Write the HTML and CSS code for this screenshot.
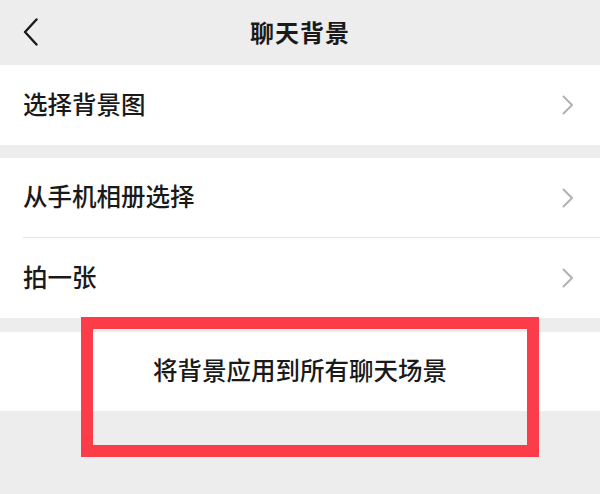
FILE: index.html
```html
<!DOCTYPE html>
<html lang="zh-CN">
<head>
<meta charset="utf-8">
<title>聊天背景</title>
<link rel="stylesheet" href="styles.css">
</head>
<body>
<div class="page">
  <header class="nav">
    <div class="nav-left">
      <svg class="back" width="16" height="28" viewBox="0 0 16 28"><path d="M13.5 1.5 L2 14 L13.5 26.5" fill="none" stroke="#1a1a1a" stroke-width="2.4" stroke-linecap="round" stroke-linejoin="round"/></svg>
    </div>
    <div class="nav-title">聊天背景</div>
    <div class="nav-right"></div>
  </header>

  <section class="group">
    <div class="row"><span class="label">选择背景图</span><svg class="arrow" width="12" height="20" viewBox="0 0 12 20"><path d="M1.5 1.5 L10 10 L1.5 18.5" fill="none" stroke="#b2b2b2" stroke-width="2" stroke-linecap="round" stroke-linejoin="round"/></svg></div>
  </section>

  <section class="group group-two">
    <div class="row"><span class="label">从手机相册选择</span><svg class="arrow" width="12" height="20" viewBox="0 0 12 20"><path d="M1.5 1.5 L10 10 L1.5 18.5" fill="none" stroke="#b2b2b2" stroke-width="2" stroke-linecap="round" stroke-linejoin="round"/></svg></div>
    <div class="divider"></div>
    <div class="row"><span class="label">拍一张</span><svg class="arrow" width="12" height="20" viewBox="0 0 12 20"><path d="M1.5 1.5 L10 10 L1.5 18.5" fill="none" stroke="#b2b2b2" stroke-width="2" stroke-linecap="round" stroke-linejoin="round"/></svg></div>
  </section>

  <section class="group group-btn">
    <div class="apply">将背景应用到所有聊天场景</div>
  </section>

  <div class="highlight"></div>
</div>
</body>
</html>
```

FILE: styles.css
```css
* { box-sizing: border-box; }
html, body {
  margin: 0;
  padding: 0;
  background: #ededed;
}
body {
  font-family: "Noto Sans CJK SC", "Noto Sans", sans-serif;
  color: #1a1a1a;
}
.page {
  position: relative;
  width: 600px;
  height: 494px;
  overflow: hidden;
  background: #ededed;
}
.nav {
  height: 65px;
  display: grid;
  grid-template-columns: 1fr auto 1fr;
  align-items: center;
}
.nav-left {
  padding-left: 23px;
  display: flex;
  align-items: center;
  padding-bottom: 2px;
}
.nav-title {
  font-size: 24px;
  font-weight: 700;
  letter-spacing: 1px;
  line-height: 1;
  padding-bottom: 1px;
}
.group {
  background: #fff;
}
.group + .group {
  margin-top: 13px;
}
.group-btn {
  margin-top: 14px !important;
}
.row {
  height: 80px;
  padding: 0 26px 0 23px;
  display: flex;
  align-items: center;
  justify-content: space-between;
}
.label {
  font-size: 24.5px;
  font-weight: 500;
  line-height: 1;
  padding-bottom: 2px;
}
.arrow { display: block; }
.divider {
  height: 1px;
  margin-left: 23px;
  background: #e5e5e5;
}
.group-two .row:first-child { height: 79px; }
.group-btn {
  height: 79px;
  display: flex;
  align-items: center;
  justify-content: center;
}
.apply {
  font-size: 24.5px;
  font-weight: 500;
  line-height: 1;
  padding-bottom: 2px;
}
.highlight {
  position: absolute;
  left: 81px;
  top: 317px;
  width: 458px;
  height: 140px;
  border: 12px solid #fc3c48;
  pointer-events: none;
}
```
